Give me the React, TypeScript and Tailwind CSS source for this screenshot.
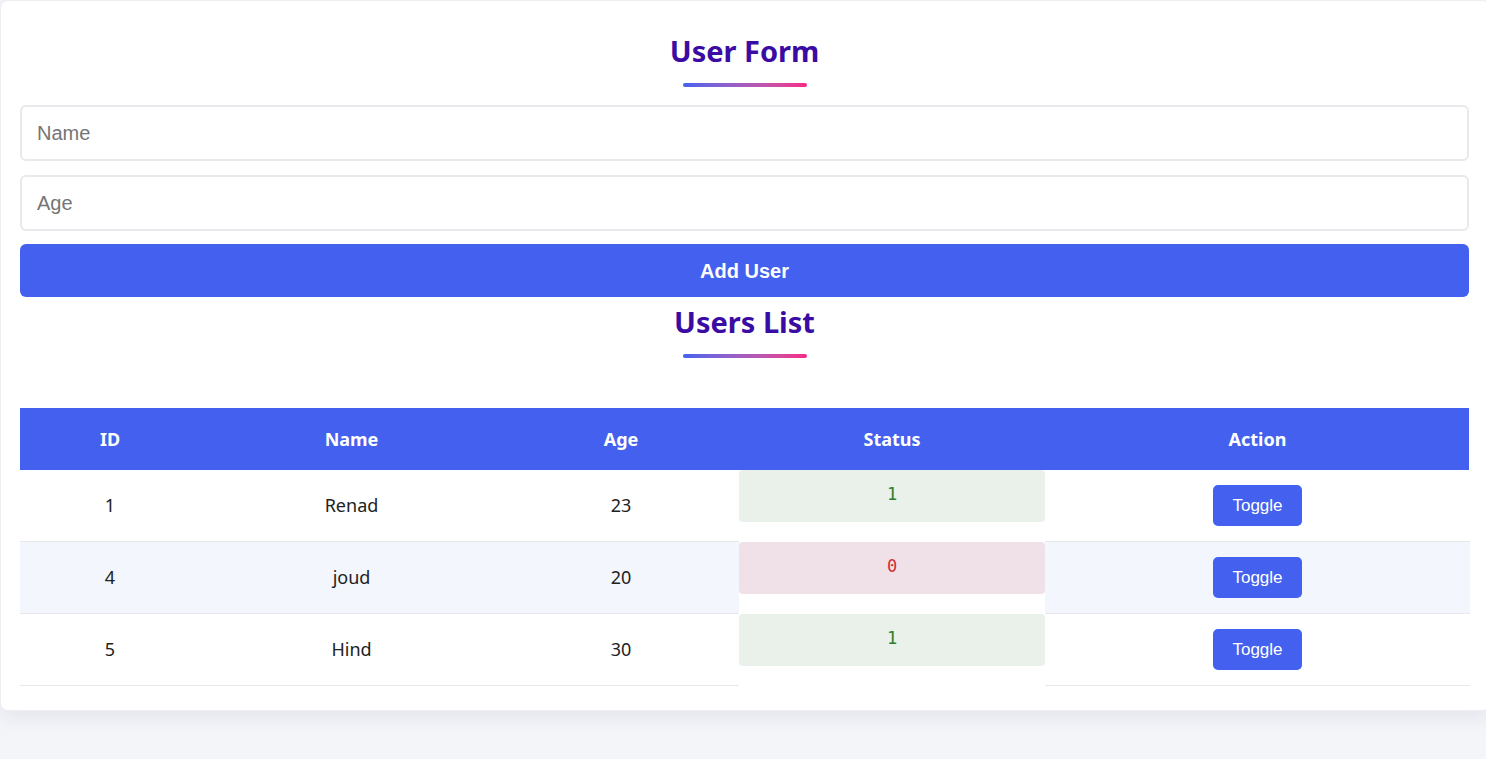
import React, { useState } from "react";

type User = { id: number; name: string; age: number; status: number };

const initialUsers: User[] = [
  { id: 1, name: "Renad", age: 23, status: 1 },
  { id: 4, name: "joud", age: 20, status: 0 },
  { id: 5, name: "Hind", age: 30, status: 1 },
];

function Title({ children }: { children: React.ReactNode }) {
  return (
    <div className="flex flex-col items-center">
      <h2 className="text-[29px] leading-9 font-bold text-[#3a0ca3] font-['Noto_Sans',sans-serif]">
        {children}
      </h2>
      <div className="mt-[14px] h-[4px] w-[124px] rounded-full bg-gradient-to-r from-[#4361ee] to-[#f72585]" />
    </div>
  );
}

export default function App() {
  const [users, setUsers] = useState<User[]>(initialUsers);
  const [name, setName] = useState("");
  const [age, setAge] = useState("");

  const toggle = (id: number) =>
    setUsers((u) => u.map((x) => (x.id === id ? { ...x, status: x.status ? 0 : 1 } : x)));

  const cols = "grid grid-cols-[180px_303px_236px_306px_425px]";

  return (
    <div className="min-h-screen w-full overflow-hidden bg-[#f4f5f9]">
      <div className="w-[1490px] rounded-lg border border-[#eceef1] bg-white pl-[19px] pr-5 pt-[32px] pb-6 shadow-[0_6px_20px_rgba(30,40,80,0.08)]">
        <Title>User Form</Title>

        <div className="mt-[18px] flex flex-col gap-[14px] font-['Liberation_Sans',Arial,sans-serif]">
          <input
            value={name}
            onChange={(e) => setName(e.target.value)}
            placeholder="Name"
            className="h-14 w-full rounded-md border-2 border-[#e7e9ec] px-[15px] text-[20px] text-[#333] outline-none placeholder:text-[#757575]"
          />
          <input
            value={age}
            onChange={(e) => setAge(e.target.value)}
            placeholder="Age"
            className="h-14 w-full rounded-md border-2 border-[#e7e9ec] px-[15px] text-[20px] text-[#333] outline-none placeholder:text-[#757575]"
          />
          <button className="mt-[-1px] h-[53px] w-full rounded-md bg-[#4361ee] text-[20px] font-bold text-white">
            Add User
          </button>
        </div>

        <div className="mt-[7px]">
          <Title>Users List</Title>
        </div>

        <div className="mt-[50px] font-['Noto_Sans',sans-serif] text-[18px]">
          <div className={`${cols} h-[62px] items-center bg-[#4361ee] text-center font-bold text-white`}>
            <div>ID</div>
            <div>Name</div>
            <div>Age</div>
            <div>Status</div>
            <div>Action</div>
          </div>
          {users.map((u, i) => {
            const rowBg = i % 2 === 1 ? "bg-[#f3f6fd]" : "bg-white";
            const cell = `flex h-[72px] items-center justify-center border-b border-[#e6e8ec] text-[#222] ${rowBg}`;
            return (
              <div key={u.id} className={cols}>
                <div className={cell}>{u.id}</div>
                <div className={cell}>{u.name}</div>
                <div className={cell}>{u.age}</div>
                <div className="h-[72px] bg-white">
                  <div
                    className={`flex h-[52px] items-center justify-center rounded-[4px] pb-[2px] font-['DejaVu_Sans_Mono',monospace] text-[17px] ${
                      u.status ? "bg-[#e9f1ea] text-[#2e7d32]" : "bg-[#f0e1e8] text-[#d32f2f]"
                    }`}
                  >
                    {u.status}
                  </div>
                </div>
                <div className={cell}>
                  <button
                    onClick={() => toggle(u.id)}
                    className="h-[41px] rounded-[5px] bg-[#4361ee] px-[19px] font-['Liberation_Sans',Arial,sans-serif] text-[17px] text-white"
                  >
                    Toggle
                  </button>
                </div>
              </div>
            );
          })}
        </div>
      </div>
    </div>
  );
}
